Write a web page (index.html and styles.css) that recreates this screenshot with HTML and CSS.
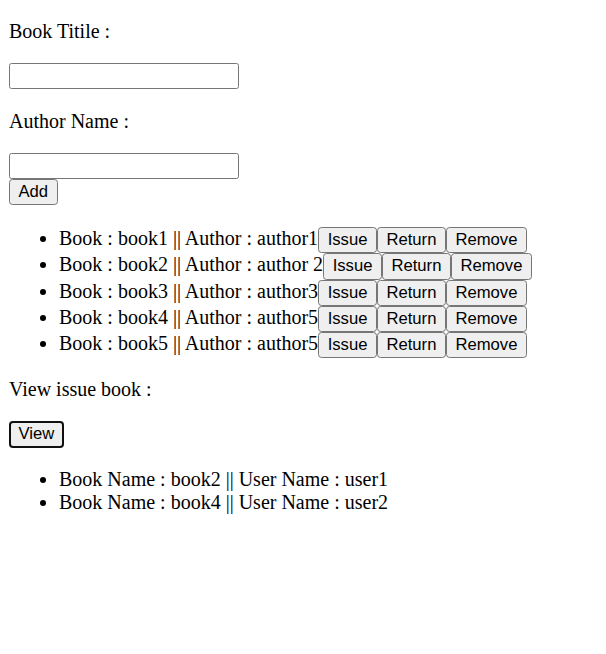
FILE: index.html
```html
<!DOCTYPE html>
<html>
<head>
<meta charset="utf-8">
<title>Library</title>
<link rel="stylesheet" href="styles.css">
</head>
<body>
<div class="page">
  <p class="label">Book Titile :</p>
  <div class="field-row first"><input class="field" type="text"></div>
  <p class="label">Author Name :</p>
  <div class="field-row"><input class="field" type="text"></div>
  <div class="btn-row"><button class="btn">Add</button></div>

  <ul class="list books">
    <li>Book : book1 || Author : author1<button class="btn">Issue</button><button class="btn">Return</button><button class="btn">Remove</button></li>
    <li>Book : book2 || Author : author 2<button class="btn">Issue</button><button class="btn">Return</button><button class="btn">Remove</button></li>
    <li>Book : book3 || Author : author3<button class="btn">Issue</button><button class="btn">Return</button><button class="btn">Remove</button></li>
    <li>Book : book4 || Author : author5<button class="btn">Issue</button><button class="btn">Return</button><button class="btn">Remove</button></li>
    <li>Book : book5 || Author : author5<button class="btn">Issue</button><button class="btn">Return</button><button class="btn">Remove</button></li>
  </ul>

  <p class="label">View issue book :</p>
  <div class="btn-row view-row"><button class="btn btn-focused">View</button></div>

  <ul class="list issued">
    <li>Book Name : book2 || User Name : user1</li>
    <li>Book Name : book4 || User Name : user2</li>
  </ul>
</div>
</body>
</html>
```

FILE: styles.css
```css
html, body {
  margin: 0;
  padding: 0;
  background: #ffffff;
}

body {
  font-family: "Liberation Serif", "Times New Roman", serif;
  font-size: 20px;
  color: #000000;
}

.page {
  padding: 0 9px;
}

.label {
  margin: 20px 0;
  line-height: 23px;
}

.field-row {
  height: 26px;
}

.field-row.first {
  height: 27px;
}

.field {
  display: block;
  box-sizing: border-box;
  width: 230px;
  height: 26px;
  margin: 0;
  padding: 1px 2.5px;
  border: 1px solid #767676;
  border-radius: 2.5px;
  background: #ffffff;
  font-family: "Liberation Sans", Arial, sans-serif;
  font-size: 16.67px;
}

.btn-row {
  display: flex;
  height: 26px;
}

.btn-row.view-row {
  height: 27px;
}

.btn {
  box-sizing: border-box;
  margin: 0;
  height: 26.25px;
  padding: 2px 8.5px;
  border: 1px solid #767676;
  border-radius: 3.5px;
  background: #efefef;
  color: #000000;
  font-family: "Liberation Sans", Arial, sans-serif;
  font-size: 16.67px;
  line-height: normal;
}

.btn-focused {
  border: 2px solid #101010;
  padding: 1px 7.5px;
  border-radius: 4px;
}

.list {
  margin: 20px 0;
  padding-left: 50px;
}

.list.books {
  margin-top: 22px;
}

.books li {
  height: 26.25px;
  line-height: 23px;
}

.books .btn {
  vertical-align: baseline;
}

.issued li {
  line-height: 23px;
}
```
